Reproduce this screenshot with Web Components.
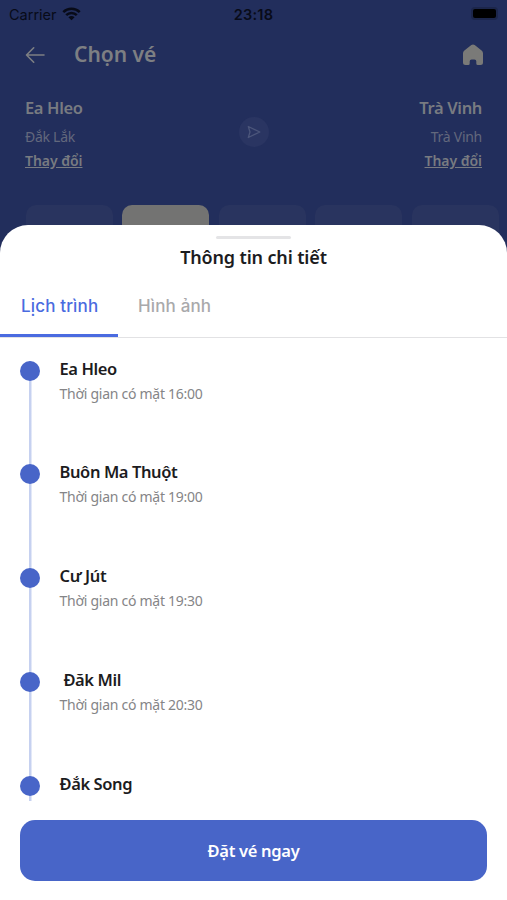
<!DOCTYPE html>
<html lang="vi">
<head>
<meta charset="utf-8">
<title>Chọn vé</title>
<style>
    body {
        margin: 0;
        width: 507px;
        height: 900px;
        overflow: hidden;
        background: #222e5c;
        font-family: "Noto Sans", "Open Sans", sans-serif;
    }
</style>
</head>
<body>
<ticket-app></ticket-app>

<script>
/**
 * Attach an open shadow root with the given markup
 * @param {HTMLElement} el
 * @param {string} html
 */
function shadow(el, html) {
    const tpl = document.createElement('template');
    tpl.innerHTML = html;
    el.attachShadow({mode: 'open'}).appendChild(tpl.content.cloneNode(true));
}

class StatusBar extends HTMLElement {
    constructor() {
        super();
        shadow(this, `
        <style>
        :host {
            display: grid;
            grid-template-columns: 1fr auto 1fr;
            align-items: center;
            height: 28px;
            padding: 0 9px;
            font: 500 15px Inter, sans-serif;
            color: #080b18;
        }
        .left { display: flex; align-items: center; gap: 5px; font-weight: 400; font-size: 14.5px; }
        .left svg { margin-bottom: 1px; }
        .time { font-weight: 600; font-size: 14.5px; letter-spacing: .25px; }
        .battery {
            justify-self: end;
            width: 23px;
            height: 9px;
            margin: 0 2px 2px 0;
            border-radius: 2px;
            background: #000;
            box-shadow: 0 0 0 2px #1c264b;
        }
        </style>
        <div class="left"><span>Carrier</span>
            <svg width="19" height="14" viewBox="0 0 19 14" fill="none" stroke="#080b18" stroke-width="2.5">
                <path d="M1.3 5.1C5.8.6 13.2.6 17.7 5.1M4.2 8.2c2.9-2.9 7.7-2.9 10.6 0"/>
                <path d="M9.5 13.2 6.4 10.2c1.7-1.6 4.5-1.6 6.2 0z" fill="#080b18" stroke="none"/>
            </svg>
        </div>
        <span class="time">23:18</span>
        <div class="battery"></div>
        `);
    }
}

class NavHeader extends HTMLElement {
    constructor() {
        super();
        shadow(this, `
        <style>
        :host {
            display: flex;
            align-items: center;
            height: 54px;
            padding: 0 23px 0 25px;
            color: #7d7f83;
        }
        h1 {
            flex: 1;
            margin: 0 0 3px 29px;
            font-size: 21px;
            font-weight: 600;
            line-height: 30px;
        }
        </style>
        <svg width="20" height="18" viewBox="0 0 20 18" fill="none" stroke="currentColor" stroke-width="1.6" stroke-linecap="round" stroke-linejoin="round"><path d="M19 9H1.5M8.7 1.8 1.5 9l7.2 7.2"/></svg>
        <h1><slot></slot></h1>
        <svg width="22" height="22" viewBox="0 0 22 22" fill="#7a7a78"><path d="M9.3 1.1Q11 0 12.7 1.1L19.6 6.4Q21 7.6 21 9.3V18.5Q21 21 18.5 21H15.8Q14.3 21 14.3 19.5V17.3Q14.3 15.4 12.4 15.4H9.6Q7.7 15.4 7.7 17.3V19.5Q7.7 21 6.2 21H3.5Q1 21 1 18.5V9.3Q1 7.6 2.4 6.4Z"/></svg>
        `);
    }
}

class RoutePlace extends HTMLElement {
    constructor() {
        super();
        shadow(this, `
        <style>
        :host {
            display: flex;
            flex-direction: column;
            width: 100px;
            color: #787b81;
            white-space: nowrap;
        }
        :host([end]) { align-items: flex-end; }
        b { font-size: 16.5px; font-weight: 600; line-height: 24px; letter-spacing: -.35px; }
        span { margin-top: 5px; font-size: 14px; line-height: 24px; color: #62687c; letter-spacing: -.27px; }
        u { font-size: 14px; font-weight: 600; line-height: 24px; letter-spacing: -.05px; }
        </style>
        <b><slot name="name"></slot></b>
        <span><slot name="province"></slot></span>
        <u>Thay đổi</u>
        `);
    }
}

class RouteSummary extends HTMLElement {
    constructor() {
        super();
        shadow(this, `
        <style>
        :host {
            display: flex;
            justify-content: space-between;
            height: 90px;
            padding: 14px 25px 0;
        }
        .go {
            display: flex;
            align-items: center;
            justify-content: center;
            width: 30px;
            height: 30px;
            margin-top: 21px;
            border-radius: 50%;
            background: #2a3562;
        }
        </style>
        <slot name="from"></slot>
        <div class="go"><svg width="14" height="14" viewBox="0 0 14 14" fill="none" stroke="#4c567b" stroke-width="1.3" stroke-linejoin="round"><path d="M1.3 1.5 12.8 7 1.3 12.5 3 7z"/></svg></div>
        <slot name="to"></slot>
        `);
    }
}

class DateStrip extends HTMLElement {
    constructor() {
        super();
        shadow(this, `
        <style>
        :host {
            display: flex;
            gap: 9.5px;
            box-sizing: border-box;
            height: 54px;
            padding: 18.5px 0 0 25.5px;
        }
        i { flex: none; width: 87px; height: 50px; border-radius: 10px; background: #29345f; }
        .on { background: #737372; }
        </style>
        <i></i><i class="on"></i><i></i><i></i><i></i>
        `);
    }
}

class TabBar extends HTMLElement {
    constructor() {
        super();
        shadow(this, `
        <style>
        :host {
            display: flex;
            height: 62px;
            box-sizing: border-box;
            border-bottom: 1px solid #e2e2e4;
            font: 500 17px/60px Inter, sans-serif;
            color: #a9a9ab;
        }
        span { height: 59px; padding: 0 20px; letter-spacing: .15px; white-space: nowrap; }
        .on { box-sizing: border-box; width: 118px; height: 61px; padding-left: 21px; padding-right: 0; color: #4a6be0; border-bottom: 3px solid #4a6be0; }
        </style>
        <span class="on">Lịch trình</span><span>Hình ảnh</span>
        `);
    }
}

class TripStop extends HTMLElement {
    constructor() {
        super();
        shadow(this, `
        <style>
        :host {
            display: grid;
            grid-template-columns: 20px 1fr;
            column-gap: 19.5px;
            flex: none;
            height: 103.8px;
            color: #1c1c1e;
        }
        .rail {
            background: linear-gradient(#c6d1f0, #c6d1f0) center / 2.5px 100% no-repeat;
        }
        .rail::before {
            content: "";
            display: block;
            width: 20px;
            height: 20px;
            border-radius: 50%;
            background: #4865c8;
        }
        b { display: block; margin-top: -4px; font-size: 16.5px; font-weight: 600; line-height: 24px; white-space: pre; letter-spacing: -.4px; }
        p { margin: 2px 0 0; font-size: 14px; line-height: 22px; color: #858587; letter-spacing: -.27px; }
        </style>
        <div class="rail"></div>
        <div><b><slot name="name"></slot></b><p><slot></slot></p></div>
        `);
    }
}

class BookButton extends HTMLElement {
    constructor() {
        super();
        shadow(this, `
        <style>
        :host { display: block; margin: 19.5px 20px 0; }
        button {
            display: block;
            width: 100%;
            height: 61px;
            padding: 0;
            border: 0;
            border-radius: 15px;
            background: #4865c8;
            color: #fff;
            font: 600 16.5px "Noto Sans", sans-serif;
            letter-spacing: -.3px;
        }
        </style>
        <button><slot></slot></button>
        `);
    }
}

class DetailSheet extends HTMLElement {
    constructor() {
        super();
        shadow(this, `
        <style>
        :host {
            display: block;
            position: relative;
            height: 675px;
            margin-top: -15px;
            border-radius: 28px 28px 0 0;
            background: #fff;
        }
        .grip { width: 75px; height: 3px; margin: 0 auto; background: #e4e4e6; border-radius: 2px; }
        .top { height: 51px; padding-top: 11px; box-sizing: border-box; }
        h2 { margin: 5px 0 0; text-align: center; font-size: 18px; font-weight: 600; line-height: 26px; color: #1c1c1e; letter-spacing: -.15px; }
        .stops { display: flex; flex-direction: column; height: 440px; margin-top: 22.5px; padding-left: 20px; overflow: hidden; }
        </style>
        <div class="top"><div class="grip"></div><h2><slot name="title"></slot></h2></div>
        <tab-bar></tab-bar>
        <div class="stops"><slot></slot></div>
        <slot name="action"></slot>
        `);
    }
}

class TicketApp extends HTMLElement {
    constructor() {
        super();
        shadow(this, `
        <style>
        :host { display: block; }
        trip-stop span, route-place span { white-space: pre; }
        </style>
        <status-bar></status-bar>
        <nav-header>Chọn vé</nav-header>
        <route-summary>
            <route-place slot="from"><span slot="name">Ea Hleo</span><span slot="province">Đắk Lắk</span></route-place>
            <route-place slot="to" end><span slot="name">Trà Vinh</span><span slot="province">Trà Vinh</span></route-place>
        </route-summary>
        <date-strip></date-strip>
        <detail-sheet>
            <span slot="title">Thông tin chi tiết</span>
            <trip-stop><span slot="name">Ea Hleo</span>Thời gian có mặt 16:00</trip-stop>
            <trip-stop><span slot="name">Buôn Ma Thuột</span>Thời gian có mặt 19:00</trip-stop>
            <trip-stop><span slot="name">Cư Jút</span>Thời gian có mặt 19:30</trip-stop>
            <trip-stop><span slot="name"> Đăk Mil</span>Thời gian có mặt 20:30</trip-stop>
            <trip-stop><span slot="name">Đắk Song</span></trip-stop>
            <book-button slot="action">Đặt vé ngay</book-button>
        </detail-sheet>
        `);
    }
}

customElements.define('status-bar', StatusBar);
customElements.define('nav-header', NavHeader);
customElements.define('route-place', RoutePlace);
customElements.define('route-summary', RouteSummary);
customElements.define('date-strip', DateStrip);
customElements.define('tab-bar', TabBar);
customElements.define('trip-stop', TripStop);
customElements.define('book-button', BookButton);
customElements.define('detail-sheet', DetailSheet);
customElements.define('ticket-app', TicketApp);
</script>
</body>
</html>
